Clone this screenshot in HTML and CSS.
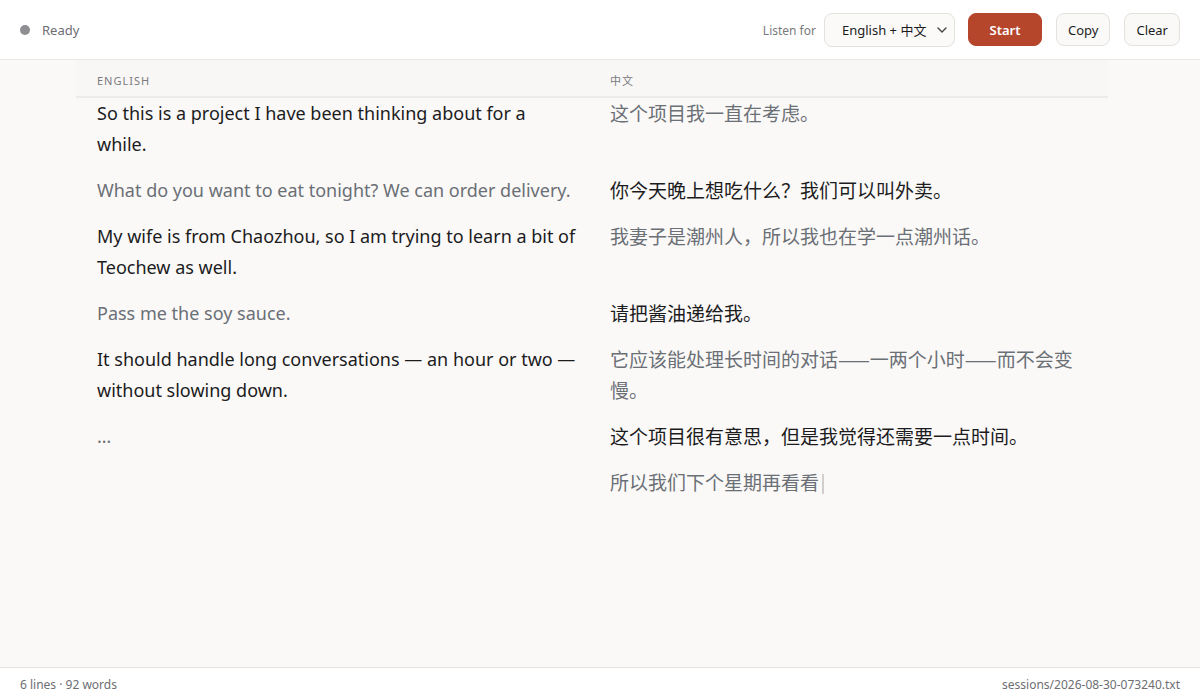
FILE: index.html
```html
<!DOCTYPE html>
<html lang="en">
<head>
    <meta charset="UTF-8">
    <meta name="viewport" content="width=device-width, initial-scale=1.0">
    <title>Live Transcript</title>
    <link rel="stylesheet" href="styles.css">
</head>
<body>

    <header class="topbar">
        <div class="status">
            <span class="status-dot"></span>
            <span class="status-text">Ready</span>
        </div>
        <div class="controls">
            <label class="listen-label" for="lang-select">Listen for</label>
            <div class="select-wrap">
                <select id="lang-select" class="lang-select">
                    <option>English + 中文</option>
                    <option>English</option>
                    <option>中文</option>
                </select>
                <svg class="chevron" width="10" height="6" viewBox="0 0 10 6" fill="none">
                    <path d="M1 1l4 4 4-4" stroke="#444" stroke-width="1.4" stroke-linecap="round" stroke-linejoin="round"/>
                </svg>
            </div>
            <button class="btn btn-primary">Start</button>
            <button class="btn">Copy</button>
            <button class="btn">Clear</button>
        </div>
    </header>

    <main class="main">
        <div class="transcript">
            <div class="col-heads">
                <div class="col-head">English</div>
                <div class="col-head">中文</div>
            </div>

            <div class="rows" id="rows">
                <!-- rows rendered below -->
            </div>
        </div>
    </main>

    <footer class="footer">
        <span>6 lines · 92 words</span>
        <span>sessions/2026-08-30-073240.txt</span>
    </footer>

    <script>
        // each row: which side was spoken (source), the other is the translation
        const lines = [
            { en: 'So this is a project I have been thinking about for a while.', zh: '这个项目我一直在考虑。', src: 'en' },
            { en: 'What do you want to eat tonight? We can order delivery.', zh: '你今天晚上想吃什么？我们可以叫外卖。', src: 'zh' },
            { en: 'My wife is from Chaozhou, so I am trying to learn a bit of Teochew as well.', zh: '我妻子是潮州人，所以我也在学一点潮州话。', src: 'en' },
            { en: 'Pass me the soy sauce.', zh: '请把酱油递给我。', src: 'zh' },
            { en: 'It should handle long conversations — an hour or two — without slowing down.', zh: '它应该能处理长时间的对话——一两个小时——而不会变慢。', src: 'en' },
            { en: '…', zh: '这个项目很有意思，但是我觉得还需要一点时间。', src: 'zh' },
            { en: '', zh: '所以我们下个星期再看看', src: 'en', live: true }
        ];

        const rows = document.getElementById('rows');

        lines.forEach(line => {
            const row = document.createElement('div');
            row.className = 'row';

            const en = document.createElement('div');
            en.className = 'cell' + (line.src === 'en' ? ' source' : ' translated');
            en.textContent = line.en;

            const zh = document.createElement('div');
            zh.className = 'cell zh' + (line.src === 'zh' ? ' source' : ' translated');
            zh.textContent = line.zh;
            if (line.live) {
                const caret = document.createElement('span');
                caret.className = 'caret';
                zh.appendChild(caret);
            }

            row.appendChild(en);
            row.appendChild(zh);
            rows.appendChild(row);
        });
    </script>

</body>
</html>
```

FILE: styles.css
```css
* {
    box-sizing: border-box;
}

body {
    font-family: 'Noto Sans', 'Noto Sans CJK SC', sans-serif;
    background-color: #faf9f7;
    color: #1c1c1e;
    margin: 0;
    padding: 0;
    height: 100vh;
    display: flex;
    flex-direction: column;
}

.topbar {
    height: 60px;
    flex-shrink: 0;
    background: #ffffff;
    border-bottom: 1px solid #ebe9e6;
    display: flex;
    align-items: center;
    justify-content: space-between;
    padding: 0 20px;
}

.status {
    display: flex;
    align-items: center;
    gap: 12px;
}

.status-dot {
    width: 10px;
    height: 10px;
    border-radius: 50%;
    background-color: #8e8e93;
}

.status-text {
    font-size: 13px;
    color: #6e6e73;
}

.controls {
    display: flex;
    align-items: center;
    gap: 13px;
}

.listen-label {
    font-size: 12px;
    color: #7a7a7e;
    margin-right: -5px;
    padding-top: 2px;
}

.select-wrap {
    position: relative;
}

.lang-select {
    appearance: none;
    -webkit-appearance: none;
    width: 131px;
    height: 34px;
    padding: 0 26px 0 17px;
    font-family: 'Noto Sans', 'Noto Sans CJK SC', sans-serif;
    font-size: 13px;
    color: #1c1c1e;
    background: #fbfaf8;
    border: 1px solid #e4e2df;
    border-radius: 8px;
    outline: none;
}

.chevron {
    position: absolute;
    right: 8px;
    top: 14px;
    pointer-events: none;
}

.btn {
    height: 33px;
    padding: 0 11px;
    font-family: 'Noto Sans', sans-serif;
    font-size: 13px;
    color: #1c1c1e;
    background: #faf9f7;
    border: 1px solid #e4e2df;
    border-radius: 8px;
    cursor: pointer;
}

.btn:hover {
    background: #f2f0ed;
}

.btn-primary {
    width: 74px;
    background: #b5452b;
    border-color: #b5452b;
    color: #ffffff;
    font-weight: 600;
}

.btn-primary:hover {
    background: #a03c24;
}

.btn + .btn {
    margin-left: 1px;
}

.main {
    flex-grow: 1;
    overflow-y: auto;
}

.transcript {
    width: 1032px;
    margin-left: 76px;
}

.col-heads,
.row {
    display: grid;
    grid-template-columns: 481px 1fr;
    column-gap: 32px;
    padding: 0 21px;
}

.col-heads {
    height: 38px;
    padding-top: 4px;
    align-items: center;
    background: #f8f7f5;
    border-bottom: 2px solid #edebe8;
    position: sticky;
    top: 0;
}

.col-head {
    font-size: 11px;
    letter-spacing: 1px;
    text-transform: uppercase;
    color: #7a7a7e;
}

.row {
    margin-bottom: 15px;
}

.cell {
    font-size: 18px;
    line-height: 31px;
}

.cell.zh {
    font-family: 'Noto Sans CJK SC', sans-serif;
    font-size: 19px;
    margin-top: -1px;
}

.source {
    color: #1c1c1e;
}

.translated {
    color: #6b6f76;
}

.caret {
    display: inline-block;
    width: 2px;
    height: 20px;
    margin-left: 3px;
    vertical-align: -4px;
    background: #d0cfcd;
}

.footer {
    height: 33px;
    flex-shrink: 0;
    background: #ffffff;
    border-top: 1px solid #e6e4e1;
    display: flex;
    align-items: center;
    justify-content: space-between;
    padding: 0 20px;
    font-size: 12px;
    color: #6e6e73;
}
```
